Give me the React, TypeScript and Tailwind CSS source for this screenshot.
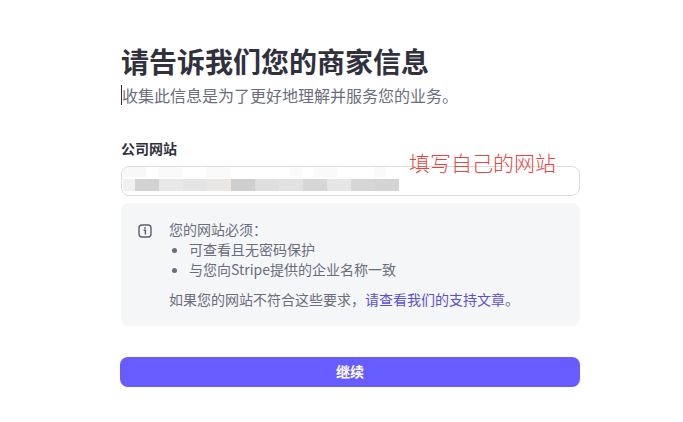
const font = { fontFamily: '"Noto Sans CJK SC", "Liberation Sans", sans-serif' };

const blurTop = [
  ["w-[24px]", "bg-[#f8f8f8]"],
  ["w-[12px]", "bg-white"],
  ["w-[24px]", "bg-[#f9f9f9]"],
  ["w-[24px]", "bg-white"],
  ["w-[24px]", "bg-[#f9f9f9]"],
  ["w-[60px]", "bg-white"],
  ["w-[12px]", "bg-[#fafafa]"],
  ["w-[12px]", "bg-white"],
  ["w-[24px]", "bg-[#fafafa]"],
  ["w-[36px]", "bg-white"],
  ["w-[12px]", "bg-[#f9f9f9]"],
];

const blurBottom = [
  ["w-[12px]", "bg-[#f0f0f0]"],
  ["w-[24px]", "bg-[#d2d2d2]"],
  ["w-[24px]", "bg-[#e8e8e8]"],
  ["w-[24px]", "bg-[#e4e4e4]"],
  ["w-[24px]", "bg-[#e9e6e3]"],
  ["w-[24px]", "bg-[#cfcfcf]"],
  ["w-[24px]", "bg-[#dedede]"],
  ["w-[24px]", "bg-[#e2e2e2]"],
  ["w-[24px]", "bg-[#d6d6d6]"],
  ["w-[24px]", "bg-[#e6e6e6]"],
  ["w-[24px]", "bg-[#d6d6d6]"],
  ["w-[24px]", "bg-[#d4d4d4]"],
];

function InfoIcon() {
  return (
    <svg width="14" height="14" viewBox="0 0 14 14" fill="none" className="mt-[5px] shrink-0">
      <rect x="1" y="1" width="12" height="12" rx="3" stroke="#5c5f6e" strokeWidth="1.4" />
      <rect x="6.2" y="3.2" width="1.6" height="1.6" fill="#5c5f6e" />
      <path d="M5.6 6.2H7.4V10.4" stroke="#5c5f6e" strokeWidth="1.4" />
    </svg>
  );
}

export default function App() {
  return (
    <div className="h-[422px] w-[683px] overflow-hidden bg-white pl-[121px] pt-[41px]" style={font}>
      <div className="w-[459px]">
        <h1 className="text-[28px] font-bold leading-[40px] text-[#30313d]">请告诉我们您的商家信息</h1>
        <p className="mt-[4px] border-l border-[#30313d] text-[16px] leading-[20px] text-[#6a6d7c]">
          收集此信息是为了更好地理解并服务您的业务。
        </p>

        <div className="mt-[33px] text-[14px] font-bold leading-[20px] text-[#30313d]">公司网站</div>

        <div className="mt-[8px] h-[30px] overflow-hidden rounded-lg border border-[#dcdde0] bg-white">
          <div className="flex h-[10px]">
            {blurTop.map(([w, c], i) => (
              <div key={i} className={`${w} ${c}`} />
            ))}
          </div>
          <div className="mt-[2px] flex h-[12px] pl-px">
            {blurBottom.map(([w, c], i) => (
              <div key={i} className={`${w} ${c}`} />
            ))}
          </div>
        </div>

        <div className="mt-[7px] flex h-[123px] gap-[17px] rounded-lg bg-[#f5f6f8] pl-[17px] pt-[16px] text-[14px] leading-[20px] text-[#6a6d7c]">
          <InfoIcon />
          <div>
            <div>您的网站必须：</div>
            <ul className="list-disc pl-[20px]">
              <li>可查看且无密码保护</li>
              <li>与您向Stripe提供的企业名称一致</li>
            </ul>
            <div className="mt-[10px]">
              如果您的网站不符合这些要求，<span className="text-[#5a4fd6]">请查看我们的支持文章</span>。
            </div>
          </div>
        </div>

        <button className="-ml-px mt-[31px] block h-[30px] w-[460px] rounded-lg bg-[#675dff] pb-[2px] text-[14px] font-bold text-white">
          继续
        </button>
      </div>

      <div className="absolute left-[409px] top-[148px] text-[21px] font-light leading-[28px] text-[#e8453c]">填写自己的网站</div>
    </div>
  );
}
